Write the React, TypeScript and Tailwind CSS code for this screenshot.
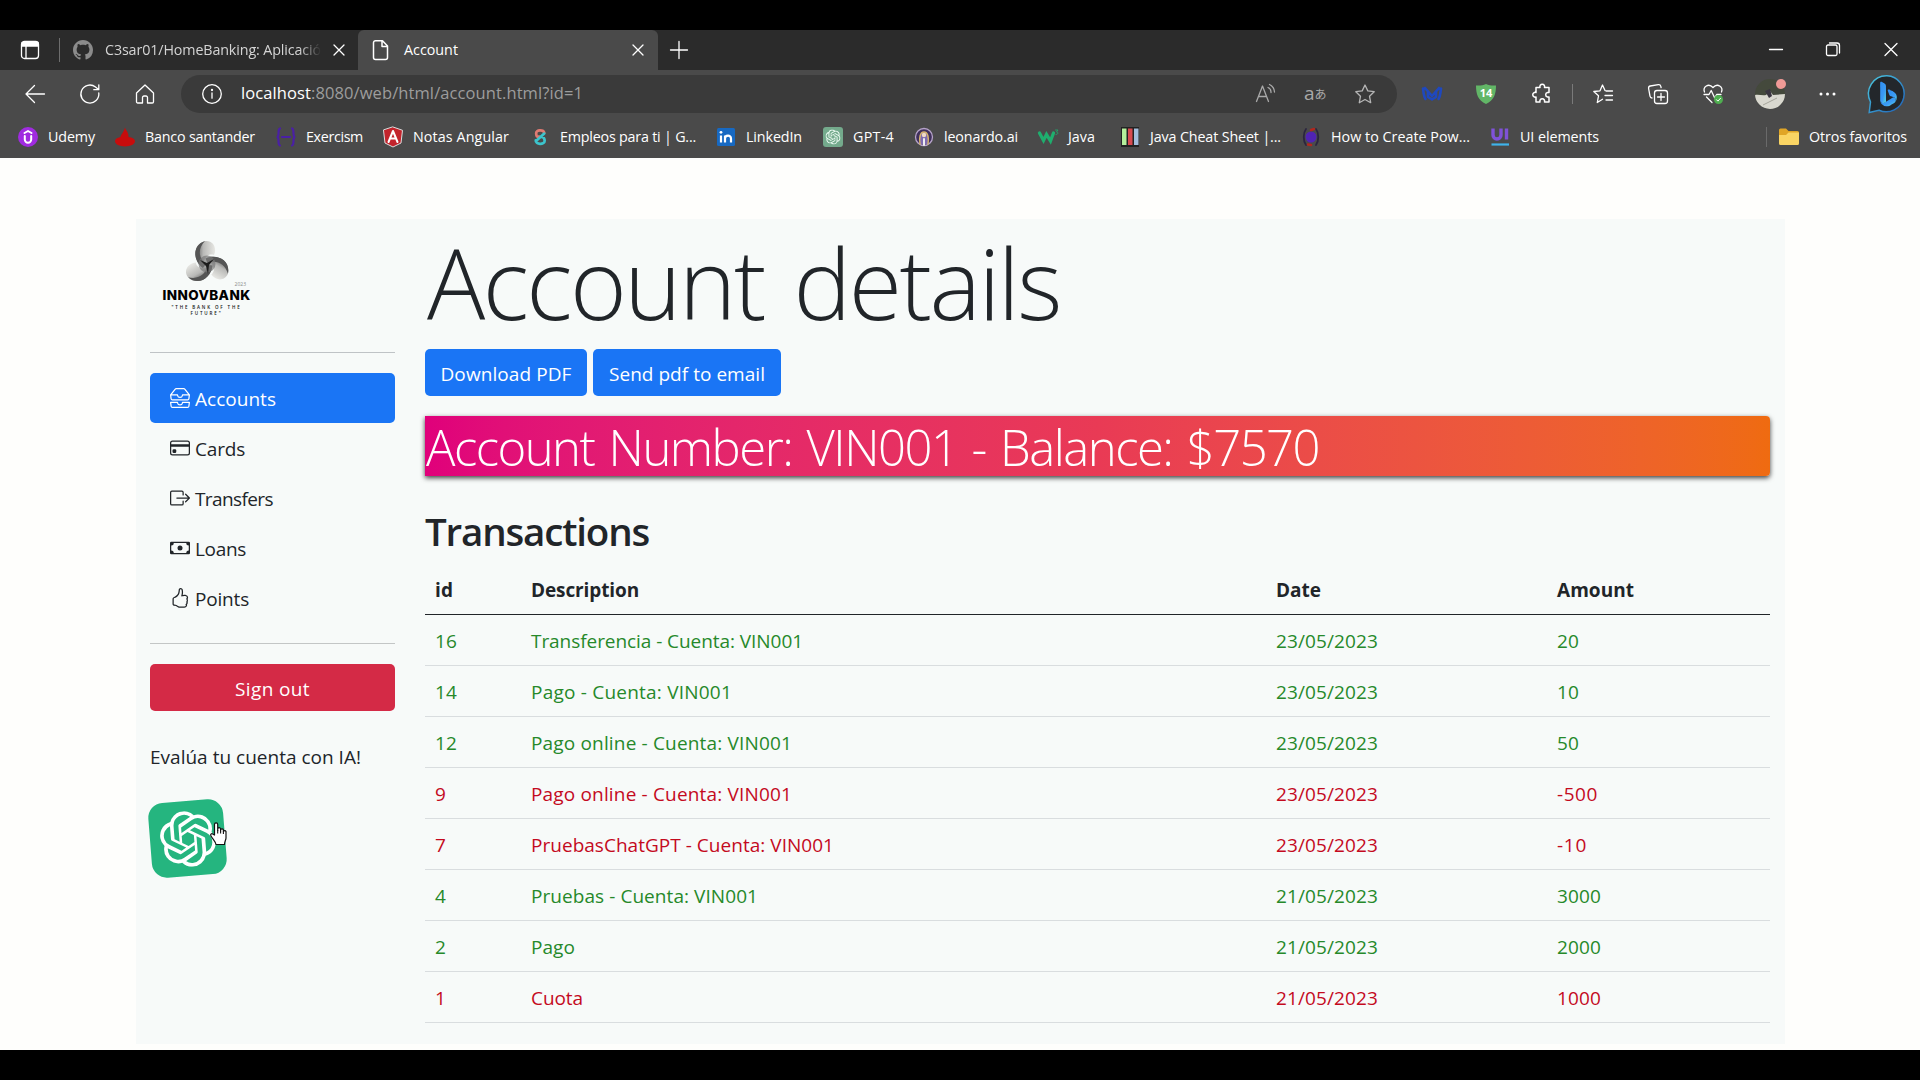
import { useLayoutEffect, useRef, useState } from "react";
import type { ReactNode } from "react";
import { BsInboxes, BsCreditCard, BsBoxArrowRight, BsCash, BsHandThumbsUp, BsBing, BsGithub } from "react-icons/bs";
import { SiOpenai } from "react-icons/si";

/** Single line of text tracked so that it takes up a given width. */
function Fit({ w, className = "", children }: { w: number; className?: string; children: string }) {
  const ref = useRef<HTMLSpanElement>(null);
  const [spacing, setSpacing] = useState(0);
  useLayoutEffect(() => {
    const el = ref.current;
    if (el) setSpacing((w - el.getBoundingClientRect().width) / children.length);
  }, []);
  return (
    <span ref={ref} className={"inline-block shrink-0 whitespace-pre " + className} style={{ letterSpacing: spacing }}>
      {children}
    </span>
  );
}

function Glyph({ className = "", children }: { className?: string; children: ReactNode }) {
  return (
    <svg viewBox="0 0 20 20" fill="none" stroke="currentColor" strokeWidth="1.3" strokeLinecap="round" strokeLinejoin="round" className={"h-5 w-5 shrink-0 overflow-visible " + className}>
      {children}
    </svg>
  );
}

const Cross = ({ className = "" }: { className?: string }) => (
  <Glyph className={className}>
    <path d="M5 5l10 10M15 5L5 15" />
  </Glyph>
);

function TabStrip() {
  return (
    <div className="flex h-10 bg-[#2b2b2b] text-[14.3px] text-white">
      <div className="flex w-[358px] items-center pl-5">
        <Glyph>
          <rect x="1.5" y="1.5" width="17" height="17" rx="3" />
          <path d="M2 2.5h16v3.5H2z" fill="currentColor" />
          <path d="M6 6v12" />
        </Glyph>
        <div className="ml-[19px] h-6 w-px bg-[#6d6d6d]" />
        <BsGithub className="ml-[13px] h-5 w-5 text-[#8b8b8b]" />
        <div className="ml-3 w-[216px] text-[#d4d4d4] [mask-image:linear-gradient(to_right,black_90%,transparent)]">
          <Fit w={216}>C3sar01/HomeBanking: Aplicació</Fit>
        </div>
        <Cross className="ml-[8px]" />
      </div>
      <div className="flex w-[300px] items-center rounded-t-md bg-[#4a4a4a] pl-[13px]">
        <Glyph>
          <path d="M4.500 .7h7l5 5.300v11.500a2 2 0 0 1-2 2h-10a2 2 0 0 1-2-2v-14.800a2 2 0 0 1 2-2zM11 1v5.500h5.500" strokeWidth="1.500" />
        </Glyph>
        <Fit w={54} className="ml-[13px]">Account</Fit>
        <Cross className="ml-[170px]" />
      </div>
      <div className="flex flex-1 items-center pl-[11px]">
        <Glyph>
          <path d="M1.500 10h17M10 1.500v17" />
        </Glyph>
        <Glyph className="ml-[1077px]">
          <path d="M3.500 9.500h13" />
        </Glyph>
        <Glyph className="ml-[37px]">
          <rect x="3.500" y="5" width="10.500" height="10.500" rx="1.500" />
          <path d="M6.500 3h7.500a2.500 2.500 0 0 1 2.500 2.500v7.500" />
        </Glyph>
        <Glyph className="ml-[38px]">
          <path d="M4 3.500l12 12M16 3.500l-12 12" />
        </Glyph>
      </div>
    </div>
  );
}

function Toolbar() {
  return (
    <div className="flex h-[47px] items-center pl-[25px] text-white">
      <Glyph>
        <path d="M19.500 10H1M9.500 1.500L1 10l8.500 8.500" />
      </Glyph>
      <Glyph className="ml-[35px]">
        <path d="M18.800 9A9 9 0 1 1 15.500 3l2.800 2.300M18.800 .8v4.900h-5" />
      </Glyph>
      <Glyph className="ml-[35px]">
        <path d="M1.500 9L10 1l8.500 8v8.800a1.200 1.200 0 0 1-1.200 1.200H12.500v-5.500a1.500 1.500 0 0 0-1.500-1.500H9a1.500 1.500 0 0 0-1.500 1.500V19H2.700a1.200 1.200 0 0 1-1.200-1.200z" />
      </Glyph>
      <div className="ml-[26px] flex h-[38px] w-[1216px] items-center rounded-full bg-[#3a3a3a] pl-[21px]">
        <Glyph>
          <circle cx="10" cy="10" r="9.300" />
          <path d="M10 9v5.200" />
          <circle cx="10" cy="6" r=".5" fill="currentColor" />
        </Glyph>
        <Fit w={70} className="ml-[19px] text-[16.500px]">localhost</Fit>
        <Fit w={272} className="text-[16.500px] text-[#9d9d9d]">:8080/web/html/account.html?id=1</Fit>
        <Glyph className="ml-[673px] text-[#a9a9a9]">
          <path d="M.5 17.500L6.500 2l6 15.500M2.500 12.500h8M12 3.500a5 5 0 0 1 3 5M13.500 .5a9 9 0 0 1 5 7.500" />
        </Glyph>
        <span className="ml-[28px] flex w-[23px] items-center text-[#a9a9a9]">
          <span className="text-[19px] leading-none">a</span>
          <span className="font-['Noto_Sans_CJK_JP',sans-serif] text-[12px] leading-none">あ</span>
        </span>
        <Glyph className="ml-[28px] text-[#b5b5b5]">
          <path d="M10 1l2.800 5.900 6.400.8-4.700 4.500 1.200 6.500L10 15.500l-5.700 3.200 1.200-6.500L.8 7.700l6.400-.8z" />
        </Glyph>
      </div>
      <Glyph className="ml-[25px]">
        <path d="M1 4.500C1.500 9 2 13 3.500 15M3 4l7 8 7-8M6 8v5l4 2.500 4-2.500V8M19 4.500c-.5 4.500-1 8.500-2.500 10.500" stroke="#1f48bd" strokeWidth="2.600" />
      </Glyph>
      <svg viewBox="0 0 20 20" className="ml-[34px] h-5 w-5">
        <path d="M10 0c3 1.300 6 1.800 10 1.500C20 10 18 16.500 10 20 2 16.500 0 10 0 1.500 4 1.800 7 1.300 10 0z" fill="#62b667" />
        <text x="10" y="13" textAnchor="middle" fontSize="11" fontWeight="700" fill="#fff">14</text>
      </svg>
      <Glyph className="ml-[36px]">
        <path d="M4 3.500h4a2.400 2.400 0 1 1 4.500 0H17v5h-1.500a2.300 2.300 0 0 0 0 4.500H17v5h-4.500a2.400 2.400 0 1 0-4.500 0H4v-5a2.400 2.400 0 1 1 0-4.500z" strokeWidth="1.500" />
      </Glyph>
      <div className="ml-[20px] h-5 w-px bg-[#7a7a7a]" />
      <Glyph className="ml-[20px]">
        <path d="M12 6.500L9.500 1 7 6.800.8 7.500l4.700 4.300-1.200 6.700 5.200-3.200M13 7h6.500M12 11.500h7.500M13 16h6.500" />
      </Glyph>
      <Glyph className="ml-[35px]">
        <rect x="6.500" y="6.500" width="13" height="13" rx="2.500" />
        <path d="M13 9.500v7M9.500 13h7M4 14c-1.300 0-1.800-.7-2-1.800L.6 4.500C.4 3 1 2.200 2.300 2l8-1.400c1.300-.2 2.200.4 2.500 1.700l.3 1.400" />
      </Glyph>
      <Glyph className="ml-[35px]">
        <path d="M1.500 8C-.5 3 5.500-1.500 10 3.500 14.500-1.500 20.500 3 18.500 8M1 10.500h5l2.200-4 3.500 7.500 2-3.500H18M3.500 13l5.500 5.500" />
        <circle cx="15.500" cy="15.500" r="4.500" fill="#4fae50" stroke="none" />
        <path d="M13.500 15.700l1.400 1.400 2.600-2.800" strokeWidth="1" />
      </Glyph>
      <svg viewBox="0 0 30 30" className="ml-[32px] h-[30px] w-[30px] overflow-visible">
        <defs>
          <clipPath id="avatar-clip"><circle cx="15" cy="15" r="15" /></clipPath>
        </defs>
        <g clipPath="url(#avatar-clip)">
          <path d="M0 0h30v30H0z" fill="#44493c" />
          <path d="M0 16c4-1 7 1 11 0l4-4 3 4 12-1v15H0z" fill="#d9d8cf" />
          <path d="M10 12l5-2 2 7-3 2z" fill="#3a3540" />
          <path d="M8 26l14-7" stroke="#a5a59b" />
        </g>
        <circle cx="26" cy="5" r="5" fill="#f09a96" />
      </svg>
      <Glyph className="ml-[32px]">
        <g fill="currentColor" stroke="none">
          <circle cx="4" cy="10" r="1.500" />
          <circle cx="10.500" cy="10" r="1.500" />
          <circle cx="17" cy="10" r="1.500" />
        </g>
      </Glyph>
      <svg viewBox="0 0 38 38" className="ml-[31px] h-[38px] w-[38px] overflow-visible">
        <defs>
          <linearGradient id="bing-ring" x1="0" y1="0" x2="1" y2="1">
            <stop offset="0" stopColor="#4cc9e0" />
            <stop offset="1" stopColor="#1f5fb8" />
          </linearGradient>
          <linearGradient id="bing-mark" x1="0" y1="0" x2="1" y2="1">
            <stop offset="0" stopColor="#2f8df0" />
            <stop offset=".6" stopColor="#3b9bf5" />
            <stop offset="1" stopColor="#59dbe0" />
          </linearGradient>
        </defs>
        <path d="M19 .8A18 18 0 1 1 11 35.300L1.200 37.500 2.500 27A18 18 0 0 1 19 .8z" fill="#23272b" stroke="url(#bing-ring)" strokeWidth="1.500" />
        <BsBing x="7.500" y="6.500" size={25} fill="url(#bing-mark)" />
      </svg>
    </div>
  );
}

const bookmarks: { label: string; cell: string; w: number; icon: ReactNode }[] = [
  {
    label: "Udemy", cell: "w-[97px]", w: 47,
    icon: <><circle cx="10" cy="10" r="10" fill="#a02be0" stroke="none" /><path d="M6.800 9v3.500a3.200 3.200 0 0 0 6.400 0V9M6.500 6L10 4l3.500 2" stroke="#fff" strokeWidth="2" /></>,
  },
  {
    label: "Banco santander", cell: "w-[161px]", w: 110,
    icon: <path d="M10 .5c.5 2.500 4 5 3.500 9.500 4 .6 6.500 2 6.500 4.300 0 3-4.500 5.200-10 5.200S0 17.300 0 14.300c0-2 2-3.500 5.500-4.200C5.500 8 9 5 10 .5z" fill="#c80c0c" stroke="none" />,
  },
  {
    label: "Exercism", cell: "w-[107px]", w: 57,
    icon: <path d="M4 1.500C1 2.500 4 8 1.500 10 4 12 1 17.500 4 18.500M16 1.500c3 1 0 6.500 2.500 8.500-2.500 2 .5 7.500-2.500 8.500M6 10h8" stroke="#4a1fa6" strokeWidth="2.200" />,
  },
  {
    label: "Notas Angular", cell: "w-[147px]", w: 96,
    icon: <><path d="M10 0l9.500 3.300L18 16l-8 4-8-4L.5 3.300z" fill="#c3242c" stroke="#ddd" strokeWidth="1" /><path d="M5.500 15L10 4l4.500 11M7.500 11.500h5" stroke="#fff" strokeWidth="2" /></>,
  },
  {
    label: "Empleos para ti | G...", cell: "w-[186px]", w: 136,
    icon: <g transform="translate(1.500 1.500) scale(.85)"><path d="M15 5c-1-4-10-4-9.500 1S7 9.500 9 9.500" stroke="#e07a72" strokeWidth="3.200" /><path d="M5 14c-.5 5 10.500 5.500 10.500.500 0-3-1-4.500-4-4.500M6 14l9-8" stroke="#3cc4cc" strokeWidth="3.200" /></g>,
  },
  {
    label: "LinkedIn", cell: "w-[107px]", w: 56,
    icon: <><rect x="1" y="1" width="18" height="18" rx="1.500" fill="#1769c2" stroke="none" /><path d="M5 8.500v7M9 15.500v-7M9 11.500c0-3.500 6-4 6 0v4" stroke="#fff" strokeWidth="2.200" strokeLinecap="butt" /><circle cx="5" cy="5.300" r="1.400" fill="#fff" stroke="none" /></>,
  },
  {
    label: "GPT-4", cell: "w-[91px]", w: 41,
    icon: <><rect width="20" height="20" rx="3" fill="#74aa8c" stroke="none" /><SiOpenai x="2.500" y="2.500" size={15} fill="#eefcf4" stroke="none" /></>,
  },
  {
    label: "leonardo.ai", cell: "w-[124px]", w: 74,
    icon: <><circle cx="10" cy="10" r="8.500" fill="#40305c" stroke="#b6a3c9" /><path d="M6 17c-1-6 0-12 4-12s5 6 4 12" stroke="#d7b46a" strokeWidth="1.500" fill="#7e6bb0" /><circle cx="10" cy="8" r="2.200" fill="#efd9c5" stroke="none" /><path d="M10 12v6" stroke="#eee" strokeWidth="2" /></>,
  },
  {
    label: "Java", cell: "w-[82px]", w: 27,
    icon: <><path d="M1.500 6l4 7.500 3-6 4 6.500 3-8" stroke="#1fae6e" strokeWidth="3.300" strokeLinejoin="miter" /><path d="M17.500 3h2.500l-1.500 2c2 0 2 2.500-.5 2.500" stroke="#1fae6e" strokeWidth=".8" /></>,
  },
  {
    label: "Java Cheat Sheet |...", cell: "w-[181px]", w: 131,
    icon: <><path d="M1 0h18v20H1z" fill="#222" stroke="none" /><path d="M2 1.500h4.500v16.500H2z" fill="#b5f09b" stroke="none" /><path d="M8 1.500h4.500v16.500H8z" fill="#d84a50" stroke="none" /><path d="M14 1.500h4.500v16.500H14z" fill="#a3bede" stroke="none" /></>,
  },
  {
    label: "How to Create Pow...", cell: "w-[189px]", w: 139,
    icon: <><circle cx="10" cy="10" r="5.500" fill="#5023b4" stroke="none" /><path d="M5 2C2 6 2 14 5 18M15 2c3 4 3 12 0 16" stroke="#2b2540" strokeWidth="1.800" /><path d="M10 3l3-1M7 17.500l3 .5" stroke="#b0281e" strokeWidth="2.500" /></>,
  },
  {
    label: "UI elements", cell: "w-[276px]", w: 79,
    icon: <><path d="M3 1.500V8a4 4 0 0 0 8 0V1.500M16.500 1.500v11" stroke="#7f52d8" strokeWidth="3.400" strokeLinecap="butt" /><path d="M1.500 17.500H19" stroke="#3fb3ea" strokeWidth="2.200" strokeLinecap="butt" /></>,
  },
];

function BookmarksBar() {
  return (
    <div className="flex h-[41px] items-center pb-0.5 pl-[18px] text-[14.300px] text-white">
      {bookmarks.map((b) => (
        <div key={b.label} className={"flex shrink-0 items-center gap-2.5 " + b.cell}>
          <Glyph>{b.icon}</Glyph>
          <Fit w={b.w}>{b.label}</Fit>
        </div>
      ))}
      <div className="h-5 w-px bg-[#6a6a6a]" />
      <Glyph className="ml-3">
        <g stroke="none">
          <path d="M0 3a1.500 1.500 0 0 1 1.500-1.500H7L9.500 4H18.500A1.500 1.500 0 0 1 20 5.500V8H0z" fill="#e0a526" />
          <path d="M0 8h7l2.500-2.500H20v11A1.500 1.500 0 0 1 18.500 18h-17A1.500 1.500 0 0 1 0 16.500z" fill="#fad564" />
        </g>
      </Glyph>
      <Fit w={98} className="ml-2.5">Otros favoritos</Fit>
    </div>
  );
}

function BankLogo() {
  return (
    <div className="flex h-[133px] w-[87px] flex-col items-center pt-[21px] text-[#111]">
      <svg viewBox="-22 -21 44 42" className="h-[42px] w-11 overflow-visible">
        <defs>
          <linearGradient id="petal" x1="0" y1="0" x2="1" y2="0">
            <stop offset="0" stopColor="#555" />
            <stop offset=".4" stopColor="#b9b9b7" />
            <stop offset="1" stopColor="#e8e8e4" />
          </linearGradient>
        </defs>
        {[0, 120, 240].map((angle) => (
          <g key={angle} transform={`translate(0 3) rotate(${angle})`}>
            <path d="M-4 4C-14-3-15-19-2-23c9-1 12 8 9 14C1-11-4-6-4 4z" fill="url(#petal)" />
            <path d="M-4 4C-14-3-15-19-2-23-10-15-8-5-1 0z" fill="#555" />
          </g>
        ))}
        <circle cy="3" r="8.500" fill="#777" fillOpacity=".7" />
        <path d="M-7-1l7 3 7-4-5 6-1 9-2-8z" fill="#1c1c1c" />
      </svg>
      <div className="-mt-px w-[79px] text-right text-[5px] leading-[7px] text-[#888]">2023</div>
      <Fit w={88} className="font-['Inter',sans-serif] text-[13.500px] leading-[15px] font-extrabold text-black">INNOVBANK</Fit>
      <Fit w={70} className="mt-px text-[4.500px] leading-[6px] font-semibold">"THE BANK OF THE</Fit>
      <Fit w={32} className="text-[4.500px] leading-[6px] font-semibold">FUTURE"</Fit>
    </div>
  );
}

const nav = [
  { label: "Accounts", w: 81, Icon: BsInboxes, active: true },
  { label: "Cards", w: 50, Icon: BsCreditCard },
  { label: "Transfers", w: 78, Icon: BsBoxArrowRight },
  { label: "Loans", w: 51, Icon: BsCash },
  { label: "Points", w: 54, Icon: BsHandThumbsUp },
];

function Sidebar() {
  return (
    <aside className="w-[245px] shrink-0">
      <div className="pl-[13px]">
        <BankLogo />
      </div>
      <hr className="mb-5 border-[#bfc3c6]" />
      <nav>
        {nav.map(({ label, w, Icon, active }) => (
          <a key={label} className={"flex h-[50px] items-center gap-[5px] rounded-[5px] pl-5 text-[19px] " + (active ? "bg-[#1a75f5] text-white" : "text-[#212529]")}>
            <Icon className="h-5 w-5" />
            <Fit w={w} className="pt-[3px]">{label}</Fit>
          </a>
        ))}
      </nav>
      <hr className="mt-5 mb-5 border-[#c3c6c6]" />
      <button className="flex h-[47px] w-full items-center justify-center rounded-[5px] bg-[#d42a46] pt-1 text-[19px] text-white">
        <Fit w={75}>Sign out</Fit>
      </button>
      <div className="mt-[31px] h-[30px] text-[19px] leading-[30px] text-[#212529]">
        <Fit w={211}>Evalúa tu cuenta con IA!</Fit>
      </div>
      <div className="relative mt-[29px] h-[75px] w-[75px]">
        <div className="flex h-[75px] w-[75px] -rotate-[4.500deg] items-center justify-center rounded-[15px] bg-[#25b57f]">
          <SiOpenai className="h-[56px] w-[56px] text-white" />
        </div>
        <svg viewBox="0 0 18 24" className="absolute top-[21px] left-[59px] h-6 w-[18px]">
          <path d="M5.500 13V2.500a1.600 1.600 0 0 1 3.200 0V8.500V6.800a1.500 1.500 0 0 1 2.900 0V9V7.800a1.500 1.500 0 0 1 2.800 0V9.500a1.400 1.400 0 0 1 2.600 0V16c0 2-1.500 3.500-1.500 6.500H7c-.5-3-3-5-5-8.500-1.200-2 .8-3 2-1.800z" fill="#fff" stroke="#111" strokeWidth="1.200" strokeLinejoin="round" />
          <path d="M8.700 8v3.500M11.600 9v2.500M14.400 9.500v2.500" stroke="#111" strokeWidth="1.100" />
        </svg>
      </div>
    </aside>
  );
}

const transactions = [
  { id: "16", description: "Transferencia - Cuenta: VIN001", w: 272, date: "23/05/2023", amount: "20", aw: 22 },
  { id: "14", description: "Pago - Cuenta: VIN001", w: 201, date: "23/05/2023", amount: "10", aw: 22 },
  { id: "12", description: "Pago online - Cuenta: VIN001", w: 261, date: "23/05/2023", amount: "50", aw: 22 },
  { id: "9", description: "Pago online - Cuenta: VIN001", w: 261, date: "23/05/2023", amount: "-500", aw: 41, debit: true },
  { id: "7", description: "PruebasChatGPT - Cuenta: VIN001", w: 303, date: "23/05/2023", amount: "-10", aw: 30, debit: true },
  { id: "4", description: "Pruebas - Cuenta: VIN001", w: 227, date: "21/05/2023", amount: "3000", aw: 44 },
  { id: "2", description: "Pago", w: 44, date: "21/05/2023", amount: "2000", aw: 44 },
  { id: "1", description: "Cuota", w: 52, date: "21/05/2023", amount: "1000", aw: 44, debit: true },
];

function TransactionsTable() {
  return (
    <div className="text-[19px]">
      <div className="grid h-[51px] grid-cols-[96px_745px_281px_1fr] items-center justify-items-start border-b border-[#212529] pt-0.5 pl-2.5 font-bold text-[#212529]">
        <Fit w={18}>id</Fit>
        <Fit w={108}>Description</Fit>
        <Fit w={45}>Date</Fit>
        <Fit w={77}>Amount</Fit>
      </div>
      {transactions.map((t) => (
        <div key={t.id} className={"grid h-[51px] grid-cols-[96px_745px_281px_1fr] items-center justify-items-start border-b border-[#d9dddf] pt-0.5 pl-2.5 " + (t.debit ? "text-[#c40a1e]" : "text-[#26892a]")}>
          <Fit w={t.id.length * 11}>{t.id}</Fit>
          <Fit w={t.w}>{t.description}</Fit>
          <Fit w={102}>{t.date}</Fit>
          <Fit w={t.aw}>{t.amount}</Fit>
        </div>
      ))}
    </div>
  );
}

function Main() {
  return (
    <section className="w-[1345px] shrink-0">
      <h1 className="h-[130px] pt-[3px] pl-0.5 text-[97px] leading-[120px] font-light text-[#212529]">
        <Fit w={633} className="[word-spacing:7px]">Account details</Fit>
      </h1>
      <div className="flex gap-1.5 text-[19px] text-white">
        <button className="flex h-[47px] w-[162px] items-center justify-center rounded-[5px] bg-[#1a75f5] pt-[3px]">
          <Fit w={131}>Download PDF</Fit>
        </button>
        <button className="flex h-[47px] w-[188px] items-center justify-center rounded-[5px] bg-[#1a75f5] pt-[3px]">
          <Fit w={156}>Send pdf to email</Fit>
        </button>
      </div>
      <div className="mt-5 h-[60px] rounded-r bg-linear-to-r from-[#e0007b] via-[#e93a55] to-[#ef6b10] pl-px text-[49px] leading-[63px] font-light text-white shadow-[0_2px_5px_rgba(0,0,0,0.75)]">
        <Fit w={893} className="[word-spacing:3px]">Account Number: VIN001 - Balance: $7570</Fit>
      </div>
      <h2 className="mt-[30px] h-[58px] text-[38.500px] leading-[50px] font-semibold text-[#212529]">
        <Fit w={224}>Transactions</Fit>
      </h2>
      <TransactionsTable />
    </section>
  );
}

export default function App() {
  return (
    <div className="h-[1080px] w-[1920px] overflow-hidden bg-black pt-[30px] font-['Open_Sans','Noto_Sans',sans-serif]">
      <header className="h-32 bg-[#4a4a4a]">
        <TabStrip />
        <Toolbar />
        <BookmarksBar />
      </header>
      <div className="h-[892px] bg-[#fefefc] pt-[61px] pl-[136px]">
        <main className="flex h-[825px] w-[1649px] gap-[30px] bg-[#f7faf9] pl-3.5">
          <Sidebar />
          <Main />
        </main>
      </div>
    </div>
  );
}
